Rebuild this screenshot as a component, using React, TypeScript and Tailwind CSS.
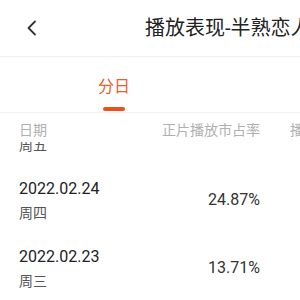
const rows = [
  { date: "2022.02.25", week: "周五", share: "" },
  { date: "2022.02.24", week: "周四", share: "24.87%" },
  { date: "2022.02.23", week: "周三", share: "13.71%" },
];

const Row = ({ date, week, share }: { date: string; week: string; share: string }) => (
  <div className="h-[68px] shrink-0 flex items-center pl-[19px]">
    <div className="w-[139px] shrink-0 flex flex-col">
      <span className="text-[16px] leading-[16px] text-[#222]">{date}</span>
      <span className="mt-[9px] text-[14px] leading-[14px] text-[#555]">{week}</span>
    </div>
    <div className="w-[102px] shrink-0 text-right text-[16px] leading-[16px] text-[#333]">{share}</div>
  </div>
);

export default function App() {
  return (
    <div
      className="w-[300px] h-[300px] overflow-hidden bg-white"
      style={{ fontFamily: 'Roboto, "Noto Sans CJK SC", sans-serif' }}
    >
      {/* top bar */}
      <div className="h-[57px] flex items-center border-b border-[#eeeeee]">
        <div className="w-[145px] shrink-0 pl-[26px] flex items-center">
          <svg width="12" height="16" viewBox="0 0 12 16" fill="none">
            <path d="M9 1.5L2.5 8L9 14.5" stroke="#333" strokeWidth="1.8" strokeLinecap="round" strokeLinejoin="round" />
          </svg>
        </div>
        <div className="text-[20px] leading-[20px] text-[#222] whitespace-nowrap">播放表现-半熟恋人</div>
      </div>

      {/* tabs */}
      <div className="h-[56px] flex border-b border-[#f2f2f2]">
        <div className="ml-[98px] w-[32px] shrink-0 flex flex-col items-center pt-[22px]">
          <span className="text-[16px] leading-[16px] text-[#e4602f] whitespace-nowrap">分日</span>
          <span className="mt-[12px] w-[22px] h-[4px] rounded-full bg-[#e8521f]" />
        </div>
      </div>

      {/* table head */}
      <div className="h-[29px] flex pl-[19px] pt-[10px] text-[14px] leading-[14px] text-[#b0b0b0] bg-white whitespace-nowrap">
        <div className="w-[139px] shrink-0">日期</div>
        <div className="w-[102px] shrink-0 text-right">正片播放市占率</div>
        <div className="ml-[30px] shrink-0">播放量</div>
      </div>

      {/* rows */}
      <div className="h-[24px] overflow-hidden flex flex-col justify-end">
        <Row {...rows[0]} />
      </div>
      <Row {...rows[1]} />
      <Row {...rows[2]} />
    </div>
  );
}
